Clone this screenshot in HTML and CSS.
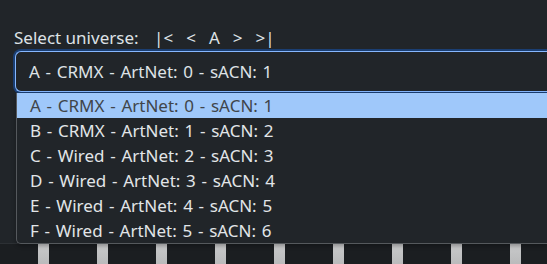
FILE: index.html
```html
<!DOCTYPE html>
<html>
<head>
<meta charset="utf-8">
<link rel="stylesheet" href="styles.css">
</head>
<body>
<div class="page">
  <div class="label-row">
    <span class="label">Select universe:</span>
    <span class="nav">
      <span class="nav-btn">|&lt;</span>
      <span class="nav-btn">&lt;</span>
      <span class="nav-btn">A</span>
      <span class="nav-btn">&gt;</span>
      <span class="nav-btn">&gt;|</span>
    </span>
  </div>
  <div class="select">A - CRMX - ArtNet: 0 - sACN: 1</div>
  <div class="bars">
    <span class="bar"></span><span class="bar"></span><span class="bar"></span>
    <span class="bar"></span><span class="bar"></span><span class="bar"></span>
    <span class="bar"></span><span class="bar"></span><span class="bar"></span>
  </div>
  <ul class="dropdown">
    <li class="opt sel">A - CRMX - ArtNet: 0 - sACN: 1</li>
    <li class="opt">B - CRMX - ArtNet: 1 - sACN: 2</li>
    <li class="opt">C - Wired - ArtNet: 2 - sACN: 3</li>
    <li class="opt">D - Wired - ArtNet: 3 - sACN: 4</li>
    <li class="opt">E - Wired - ArtNet: 4 - sACN: 5</li>
    <li class="opt">F - Wired - ArtNet: 5 - sACN: 6</li>
  </ul>
</div>
</body>
</html>
```
FILE: styles.css
```css
html, body {
  margin: 0;
  padding: 0;
  background: #212529;
  overflow: hidden;
}
body {
  width: 547px;
  height: 264px;
  font-family: "Noto Sans", "Open Sans", sans-serif;
  color: #dee2e6;
  font-size: 17px;
}
.page {
  position: relative;
  height: 264px;
  padding-top: 25px;
  box-sizing: border-box;
  overflow: hidden;
}
.label-row {
  display: flex;
  align-items: center;
  height: 24px;
  padding-left: 14px;
}
.label {
  margin-right: 9px;
}
.nav {
  display: flex;
}
.nav-btn {
  padding: 0 6.5px;
}
.select {
  margin: 2px 0 0 15px;
  height: 41px;
  box-sizing: border-box;
  border: 1px solid #86b7fe;
  border-right: none;
  border-radius: 6px 0 0 6px;
  box-shadow: 0 0 0 2px rgba(13, 110, 253, 0.35);
  background: #212529;
  display: flex;
  align-items: center;
  padding-left: 13px;
  word-spacing: 1.3px;
}
.bars {
  position: absolute;
  top: 243px;
  left: 0;
  right: 0;
  height: 21px;
  background: #1b1e21;
  border-top: 1px solid #2c3034;
  display: flex;
  gap: 48px;
  padding-left: 38px;
}
.bar {
  flex: none;
  width: 11px;
  height: 22px;
  margin-top: -1px;
  background: linear-gradient(#c9cacb, #b9babb);
}
.dropdown {
  position: absolute;
  top: 93px;
  left: 16px;
  right: 0;
  margin: 0;
  padding: 0;
  list-style: none;
  background: #212529;
  border: 1px solid #55595d;
  border-top: none;
  border-right: none;
  border-radius: 0 0 0 5px;
  box-shadow: 0 2px 4px rgba(0, 0, 0, 0.3);
}
.opt {
  height: 25px;
  line-height: 25px;
  padding-left: 13px;
  color: #e2e5e8;
  word-spacing: 1.3px;
}
.opt.sel {
  background: #9fc8fa;
  color: #40454a;
}
```
